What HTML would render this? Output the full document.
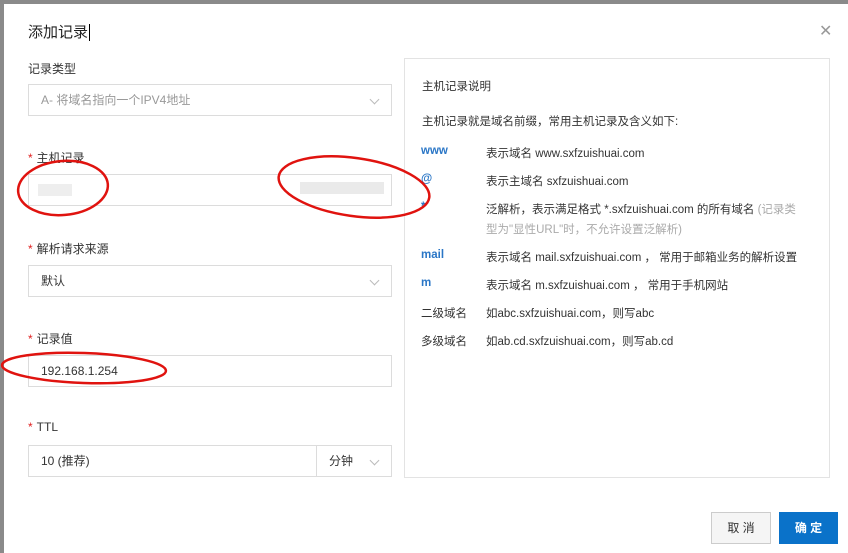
<!DOCTYPE html>
<html><head><meta charset="utf-8"><style>
*{margin:0;padding:0;box-sizing:border-box}
body{width:848px;height:553px;background:#8a8a8a;position:relative;overflow:hidden;font-family:"Liberation Sans","Noto Sans CJK SC",sans-serif;font-size:12px;color:#333}
.modal{position:absolute;left:4px;top:4px;width:844px;height:549px;background:#fff}
.a{position:absolute;white-space:nowrap}
.box{position:absolute;border:1px solid #dcdcdc;background:#fff;height:32px;line-height:30px;padding-left:12px}
.lbl{position:absolute;font-size:12px;color:#333}
.st{color:#e02020;margin-right:4px}
.chev{position:absolute;right:13px;top:11px;width:7px;height:7px;border-right:1px solid #bbb;border-bottom:1px solid #bbb;transform:rotate(45deg)}
.k{position:absolute;left:16px;color:#2a76c6;font-weight:bold}
.kg{position:absolute;left:16px;color:#333}
.v{position:absolute;left:81px;white-space:nowrap}
.panel{font-size:11.5px}
</style></head><body>
<div class="modal"></div>
<div class="a" style="left:28px;top:21px;font-size:15px;color:#222">添加记录<span style="border-left:1px solid #000;margin-left:1px"></span></div>
<div class="a" style="left:819px;top:21px;font-size:16px;color:#999">✕</div>

<div class="lbl" style="left:28px;top:60px">记录类型</div>
<div class="box" style="left:28px;top:84px;width:364px;color:#999;background:#fff">A- 将域名指向一个IPV4地址<span class="chev"></span></div>

<div class="lbl" style="left:28px;top:149px"><span class="st">*</span>主机记录</div>
<div class="box" style="left:28px;top:174px;width:364px"></div>
<div class="a" style="left:38px;top:184px;width:34px;height:12px;background:#eee"></div>
<div class="a" style="left:300px;top:182px;width:84px;height:12px;background:#eaeaea"></div>

<div class="lbl" style="left:28px;top:240px"><span class="st">*</span>解析请求来源</div>
<div class="box" style="left:28px;top:265px;width:364px">默认<span class="chev"></span></div>

<div class="lbl" style="left:28px;top:330px"><span class="st">*</span>记录值</div>
<div class="box" style="left:28px;top:355px;width:364px">192.168.1.254</div>

<div class="lbl" style="left:28px;top:420px"><span class="st">*</span>TTL</div>
<div class="box" style="left:28px;top:445px;width:289px">10 (推荐)</div>
<div class="box" style="left:316px;top:445px;width:76px">分钟<span class="chev"></span></div>

<div class="a panel" style="left:404px;top:58px;width:426px;height:420px;border:1px solid #e3e3e3">
 <div class="a" style="left:17px;top:19px">主机记录说明</div>
 <div class="a" style="left:17px;top:54px">主机记录就是域名前缀，常用主机记录及含义如下:</div>
 <div class="k" style="top:86px">www</div><div class="v" style="top:86px">表示域名 www.sxfzuishuai.com</div>
 <div class="k" style="top:114px">@</div><div class="v" style="top:114px">表示主域名 sxfzuishuai.com</div>
 <div class="k" style="top:142px">*</div><div class="v" style="top:142px">泛解析，表示满足格式 *.sxfzuishuai.com 的所有域名 <span style="color:#aaa">(记录类</span></div>
 <div class="v" style="top:162px;color:#aaa">型为"显性URL"时，不允许设置泛解析)</div>
 <div class="k" style="top:190px">mail</div><div class="v" style="top:190px">表示域名 mail.sxfzuishuai.com ， 常用于邮箱业务的解析设置</div>
 <div class="k" style="top:218px">m</div><div class="v" style="top:218px">表示域名 m.sxfzuishuai.com ， 常用于手机网站</div>
 <div class="kg" style="top:246px">二级域名</div><div class="v" style="top:246px">如abc.sxfzuishuai.com，则写abc</div>
 <div class="kg" style="top:274px">多级域名</div><div class="v" style="top:274px">如ab.cd.sxfzuishuai.com，则写ab.cd</div>
</div>

<div class="a" style="left:711px;top:512px;width:60px;height:32px;border:1px solid #ccc;background:#f5f5f5;text-align:center;line-height:30px">取 消</div>
<div class="a" style="left:779px;top:512px;width:59px;height:32px;background:#0a72c9;color:#fff;text-align:center;line-height:32px;font-weight:bold">确 定</div>

<svg class="a" style="left:0;top:0" width="848" height="553">
<g fill="none" stroke="#e0130f" stroke-width="2.5">
<ellipse cx="63" cy="188" rx="45" ry="27" transform="rotate(-5 63 188)"/>
<ellipse cx="354" cy="187" rx="76" ry="29" transform="rotate(8 354 187)"/>
<ellipse cx="84" cy="368" rx="82" ry="15" transform="rotate(2 84 368)"/>
</g></svg>
</body></html>
